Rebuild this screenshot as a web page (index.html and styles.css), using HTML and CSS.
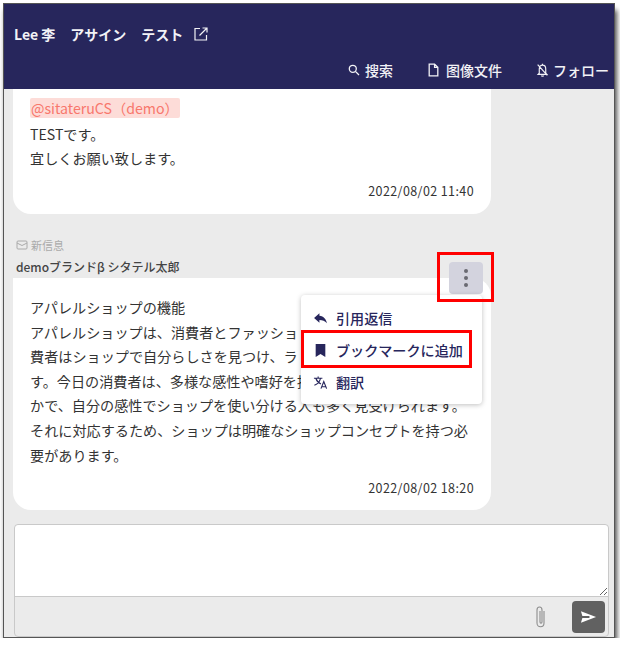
FILE: index.html
```html
<!DOCTYPE html>
<html lang="ja">
<head>
    <meta charset="UTF-8">
    <meta name="viewport" content="width=device-width, initial-scale=1.0">
    <title>アサイン テスト</title>
    <link rel="stylesheet" href="styles.css">
</head>
<body>
    <div class="window">
        <header class="header">
            <div class="header-title">
                <span>Lee 李</span>
                <span>アサイン</span>
                <span>テスト</span>
                <svg class="icon-open" viewBox="0 0 14 14" fill="none" stroke="currentColor" stroke-width="1.2">
                    <path d="M6 1.500H1V13h11.500V8"/>
                    <path d="M5.500 8.500L13 1M8.500 1H13v4.500"/>
                </svg>
            </div>
            <nav class="header-nav">
                <a class="nav-item nav-search">
                    <svg viewBox="0 0 12 12" fill="none" stroke="currentColor" stroke-width="1.3"><circle cx="4.800" cy="4.800" r="3.500"/><path d="M7.400 7.400L11 11"/></svg>
                    搜索
                </a>
                <a class="nav-item nav-file">
                    <svg viewBox="0 0 10 13" fill="none" stroke="currentColor" stroke-width="1.2"><path d="M1 1h5l3 3v8H1zM6 1v3h3"/></svg>
                    图像文件
                </a>
                <a class="nav-item nav-follow">
                    <svg viewBox="0 0 12 13" fill="none" stroke="currentColor" stroke-width="1.1"><path d="M3 9.500V5.500C3 3.500 4.300 2 6 2s3 1.500 3 3.500v4l1 1H2zM5 11.500c0 1 2 1 2 0M1.500 1.500l9 10M6 .8V2"/></svg>
                    フォロー
                </a>
            </nav>
        </header>

        <main class="messages">
            <section class="bubble bubble-first">
                <span class="mention">@sitateruCS（demo）</span>
                <p class="text">TESTです。<br>宜しくお願い致します。</p>
                <div class="time">2022/08/02 11:40</div>
            </section>

            <div class="meta-new">
                <svg viewBox="0 0 12 10" fill="none" stroke="currentColor" stroke-width="1"><rect x="1" y="1" width="10" height="8" rx="1"/><path d="M1 3l5 2.500L11 3"/></svg>
                新信息
            </div>
            <div class="meta-name">demoブランドβ シタテル太郎</div>

            <section class="bubble bubble-second">
                <p class="text">アパレルショップの機能<br>アパレルショップは、消費者とファッショ<br>費者はショップで自分らしさを見つけ、ラ<br>す。今日の消費者は、多様な感性や嗜好を持<br>かで、自分の感性でショップを使い分ける人も多く見受けられます。<br>それに対応するため、ショップは明確なショップコンセプトを持つ必<br>要があります。</p>
                <div class="time">2022/08/02 18:20</div>
            </section>

            <button class="more-btn" aria-label="more"><i></i><i></i><i></i></button>
            <div class="menu">
                <div class="menu-item">
                    <svg viewBox="0 0 14 12" fill="currentColor"><path d="M6 1L1 5.500 6 10V7.300c3 0 5 .7 7 3.200-.6-3.500-3-6.500-7-7z"/></svg>
                    引用返信
                </div>
                <div class="menu-item">
                    <svg viewBox="0 0 12 14" fill="currentColor"><path d="M1.500 1h9v12L6 10.300 1.500 13z"/></svg>
                    ブックマークに追加
                </div>
                <div class="menu-item">
                    <svg viewBox="0 0 16 15" fill="none" stroke="currentColor" stroke-width="1.200"><path d="M1 3h9M5.500 1v2M8 3c-.8 3.500-3.200 6-6.500 7.500M3 3c1 3 3 5 5.500 6M8.500 14l3-7.500 3 7.500M9.500 12h4"/></svg>
                    翻訳
                </div>
            </div>
            <div class="highlight highlight-more"></div>
            <div class="highlight highlight-bookmark"></div>
        </main>

        <footer class="composer">
            <textarea class="composer-input"></textarea>
            <div class="composer-bar">
                <svg class="icon-clip" viewBox="0 0 14 24" fill="none" stroke="currentColor" stroke-width="1.100"><path d="M10 6v12c0 5-7 5-7 0V5c0-4 5-4 5 0v12c0 1.500-2 1.500-2 0V6"/></svg>
                <button class="send-btn" aria-label="send">
                    <svg viewBox="0 0 18 14" fill="#fff"><path d="M1 1l16 6-16 6 1.500-5H10V6H2.500z"/></svg>
                </button>
            </div>
        </footer>
    </div>
</body>
</html>
```

FILE: styles.css
```css
* {
    box-sizing: border-box;
}
body {
    margin: 0;
    background: #fff;
    font-family: "Noto Sans CJK JP", "Noto Sans", sans-serif;
    color: #333;
}
.window {
    width: 612px;
    height: 635px;
    margin: 3px 0 0 3px;
    border: 1px solid #555;
    background: #ebebeb;
    box-shadow: 2px 7px 5px rgba(0, 0, 0, 0.7);
    display: flex;
    flex-direction: column;
    overflow: hidden;
}

/* header */
.header {
    height: 85px;
    flex-shrink: 0;
    background: #27265c;
    color: #f2f2f6;
    padding: 0 5px 0 10px;
}
.header-title {
    display: flex;
    align-items: center;
    gap: 15px;
    height: 59px;
    font-size: 14px;
    font-weight: 700;
}
.icon-open {
    width: 14px;
    height: 14px;
    margin-left: -4px;
}
.header-nav {
    display: flex;
    justify-content: flex-end;
    gap: 34px;
    height: 26px;
    font-size: 14px;
    font-weight: 500;
}
.nav-item {
    display: flex;
    align-items: center;
    height: 14px;
}
.nav-search { gap: 5px; margin-right: 1px; }
.nav-file { gap: 7px; }
.nav-follow { gap: 4px; }
.nav-search svg { width: 12px; height: 12px; }
.nav-file svg { width: 11px; height: 14px; }
.nav-follow svg { width: 13px; height: 14px; }

/* messages */
.messages {
    position: relative;
    flex: 1;
    padding: 0 9px;
    overflow: hidden;
}
.bubble {
    width: 478px;
    background: #fff;
    border-radius: 0 0 18px 18px;
    padding: 0 17px;
}
.bubble-first {
    height: 125px;
    padding-top: 9px;
}
.bubble-first .text {
    margin-top: 4px;
    line-height: 24px;
}
.mention {
    display: block;
    width: fit-content;
    height: 20px;
    padding: 0 1px;
    background: #fddcd8;
    color: #f8776c;
    border-radius: 2px;
    font-size: 14.200px;
    line-height: 20px;
}
.text {
    margin: 0;
    font-size: 14.130px;
    line-height: 24.600px;
    white-space: nowrap;
}
.time {
    text-align: right;
    font-size: 12.500px;
    line-height: 16px;
    margin-top: 13px;
    letter-spacing: 0.4px;
}
.meta-new {
    display: flex;
    align-items: center;
    gap: 3px;
    margin: 23px 0 0 3px;
    height: 16px;
    font-size: 11px;
    color: #aaa;
}
.meta-new svg {
    width: 12px;
    height: 10px;
}
.meta-name {
    margin: 6px 0 0 3px;
    height: 16px;
    line-height: 16px;
    font-size: 12px;
    font-weight: 500;
    color: #444;
}
.bubble-second {
    height: 232px;
    margin-top: 3px;
    padding-top: 17px;
    border-radius: 0 18px 18px 18px;
}
.more-btn {
    position: absolute;
    top: 173px;
    left: 445px;
    width: 34px;
    height: 32px;
    padding: 0;
    border: 0;
    border-radius: 4px;
    background: #d3d3de;
    display: flex;
    flex-direction: column;
    align-items: center;
    justify-content: center;
    gap: 3px;
}
.more-btn i {
    width: 4px;
    height: 4px;
    border-radius: 50%;
    background: #6a6a72;
}
.menu {
    position: absolute;
    top: 206px;
    left: 297px;
    width: 181px;
    height: 109px;
    padding-top: 7px;
    background: #fff;
    border-radius: 4px;
    box-shadow: 0 1px 5px rgba(0, 0, 0, 0.25);
    color: #27265c;
    font-size: 14.100px;
    font-weight: 500;
}
.menu-item {
    display: flex;
    align-items: center;
    gap: 8px;
    height: 32px;
    padding-left: 12px;
}
.menu-item svg {
    width: 15px;
    height: 15px;
    flex-shrink: 0;
}
.highlight {
    position: absolute;
    border: 3px solid #f00;
}
.highlight-more {
    top: 163px;
    left: 433px;
    width: 57px;
    height: 50px;
}
.highlight-bookmark {
    top: 241px;
    left: 297px;
    width: 171px;
    height: 38px;
}

/* composer */
.composer {
    flex-shrink: 0;
    height: 113px;
    margin: 0 5px 0 10px;
    border: 1px solid #c9c9c9;
    border-radius: 4px;
    display: flex;
    flex-direction: column;
}
.composer-input {
    display: block;
    width: 100%;
    height: 72px;
    border: 0;
    border-bottom: 1px solid #c9c9c9;
    border-radius: 4px 4px 0 0;
    background: #fff;
    resize: vertical;
    outline: none;
}
.composer-bar {
    flex: 1;
    display: flex;
    align-items: center;
    justify-content: flex-end;
    gap: 24px;
    padding-right: 3px;
}
.icon-clip {
    width: 14px;
    height: 24px;
    color: #8d8d8d;
}
.send-btn {
    width: 33px;
    height: 32px;
    padding: 0;
    border: 0;
    border-radius: 4px;
    background: #616161;
    display: flex;
    align-items: center;
    justify-content: center;
}
.send-btn svg {
    width: 17px;
    height: 14px;
}
```
